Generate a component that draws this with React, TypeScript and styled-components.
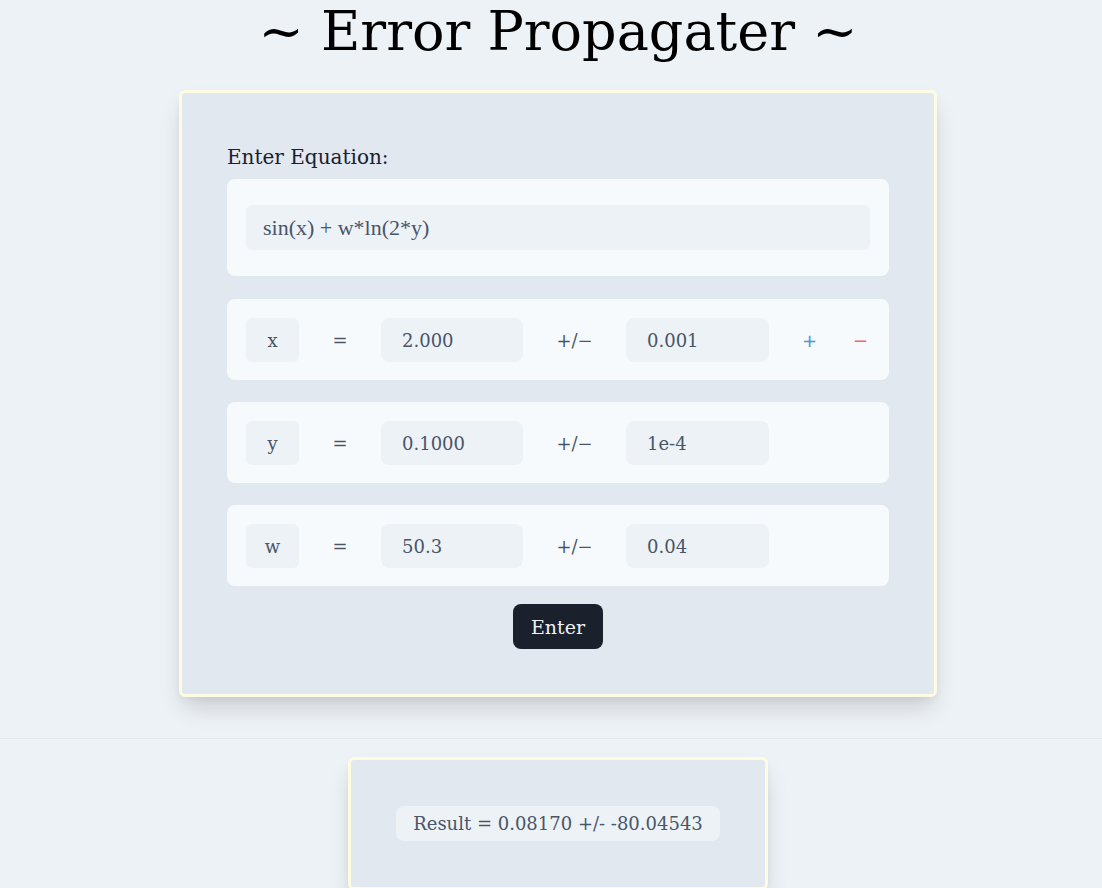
import React, { useState } from 'react';
import styled, { createGlobalStyle } from 'styled-components';

const GlobalStyle = createGlobalStyle`
  body {
    margin: 0;
    background-color: #edf2f7;
    font-family: "DejaVu Serif", serif;
    color: #1a202c;
  }
`;

const Page = styled.div`
  display: flex;
  flex-direction: column;
`;

const Section = styled.section`
  display: flex;
  flex-direction: column;
  align-items: center;
  padding-left: 14px;
`;

const Title = styled.h1`
  margin: 0 0 26px;
  font-size: 54px;
  line-height: 64px;
  font-weight: 400;
  color: #000;
`;

const Card = styled.div`
  box-sizing: border-box;
  width: 758px;
  padding: 49px 45px 45px;
  background-color: #e2e8f0;
  border: 3px solid #fdfbe2;
  border-radius: 6px;
  box-shadow: 0 14px 24px -4px rgba(0, 0, 0, 0.15), 0 4px 8px -2px rgba(0, 0, 0, 0.06);
  display: flex;
  flex-direction: column;
`;

const Label = styled.label`
  font-size: 20px;
  line-height: 30px;
  margin-bottom: 7px;
`;

const Panel = styled.div<{ $gap?: number }>`
  background-color: #f7fafc;
  border-radius: 8px;
  padding: 26px 19px;
  margin-top: ${(p) => p.$gap ?? 0}px;
  display: flex;
  align-items: center;
`;

const Row = styled(Panel)`
  padding: 19px 19px 18px;
`;

const EquationInput = styled.input`
  box-sizing: border-box;
  width: 100%;
  height: 45px;
  border: none;
  outline: none;
  border-radius: 6px;
  background-color: #edf2f7;
  padding: 0 17px;
  font-family: "Liberation Serif", serif;
  font-size: 22px;
  color: #4a5568;
`;

const VarBox = styled.div`
  flex-shrink: 0;
  width: 53px;
  height: 44px;
  border-radius: 6px;
  background-color: #edf2f7;
  display: flex;
  align-items: center;
  justify-content: center;
  font-size: 18px;
  color: #4a5568;
`;

const Sign = styled.span<{ $w: number }>`
  flex-shrink: 0;
  width: ${(p) => p.$w}px;
  text-align: center;
  font-size: 18px;
  color: #4a5568;
`;

const NumInput = styled.input<{ $w: number }>`
  flex-shrink: 0;
  box-sizing: border-box;
  width: ${(p) => p.$w}px;
  height: 44px;
  border: none;
  outline: none;
  border-radius: 8px;
  background-color: #edf2f7;
  padding: 0 21px;
  font-family: "DejaVu Serif", serif;
  font-size: 18px;
  color: #4a5568;
`;

const Actions = styled.div`
  display: flex;
  gap: 36px;
  margin-left: 33px;
`;

const IconButton = styled.button<{ $color: string }>`
  border: none;
  background: none;
  padding: 0;
  cursor: pointer;
  color: ${(p) => p.$color};
  font-family: "DejaVu Sans", sans-serif;
  font-size: 18px;
`;

const EnterButton = styled.button`
  align-self: center;
  margin-top: 18px;
  width: 90px;
  height: 45px;
  border: none;
  border-radius: 8px;
  background-color: #1a202c;
  color: #edf2f7;
  font-family: "DejaVu Serif", serif;
  font-size: 19px;
  cursor: pointer;
`;

const Divider = styled.hr`
  width: 100%;
  margin: 41px 0 18px;
  border: none;
  border-top: 1px solid #e2e8f0;
`;

const ResultCard = styled(Card)`
  width: 420px;
  padding: 46px 0;
  align-items: center;
`;

const ResultPill = styled.div`
  padding: 0 17px;
  height: 35px;
  display: flex;
  align-items: center;
  border-radius: 8px;
  background-color: #edf2f7;
  font-size: 18px;
  color: #4a5568;
`;

type Variable = { name: string; value: string; error: string };

const App = () => {
  const [equation, setEquation] = useState('sin(x) + w*ln(2*y)');
  const [vars, setVars] = useState<Variable[]>([
    { name: 'x', value: '2.000', error: '0.001' },
    { name: 'y', value: '0.1000', error: '1e-4' },
    { name: 'w', value: '50.3', error: '0.04' },
  ]);

  const update = (i: number, key: 'value' | 'error', v: string) => {
    setVars((prev) => prev.map((item, j) => (j === i ? { ...item, [key]: v } : item)));
  };

  return (
    <Page>
      <GlobalStyle />
      <Section>
        <Title>~ Error Propagater ~</Title>
        <Card>
          <Label htmlFor="equation">Enter Equation:</Label>
          <Panel>
            <EquationInput id="equation" value={equation} onChange={(e) => setEquation(e.target.value)} />
          </Panel>
          {vars.map((v, i) => (
            <Row key={v.name} $gap={i === 0 ? 23 : 22}>
              <VarBox>{v.name}</VarBox>
              <Sign $w={82}>=</Sign>
              <NumInput $w={142} value={v.value} onChange={(e) => update(i, 'value', e.target.value)} />
              <Sign $w={103}>+/&minus;</Sign>
              <NumInput $w={143} value={v.error} onChange={(e) => update(i, 'error', e.target.value)} />
              {i === 0 && (
                <Actions>
                  <IconButton $color="#4299e1">+</IconButton>
                  <IconButton $color="#f56565">&minus;</IconButton>
                </Actions>
              )}
            </Row>
          ))}
          <EnterButton>Enter</EnterButton>
        </Card>
      </Section>
      <Divider />
      <Section>
        <ResultCard>
          <ResultPill>Result = 0.08170 +/- -80.04543</ResultPill>
        </ResultCard>
      </Section>
    </Page>
  );
};

export default App;
